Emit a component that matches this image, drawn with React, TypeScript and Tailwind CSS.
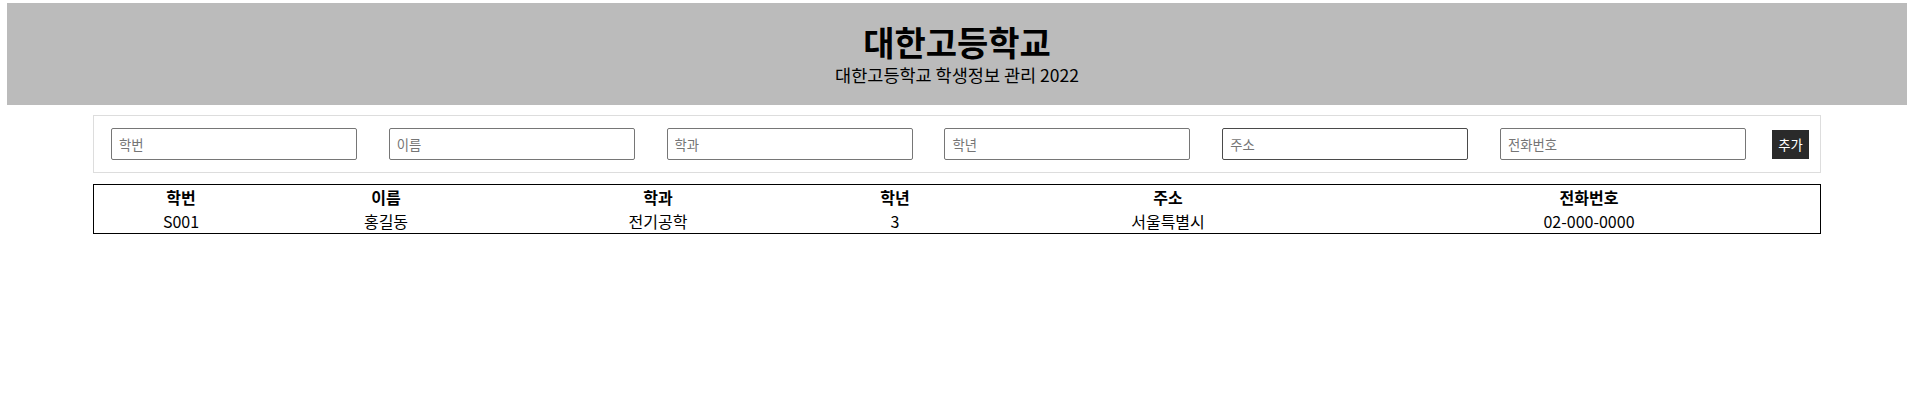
import React from "react"

const fields = ["학번", "이름", "학과", "학년", "주소", "전화번호"]

const columns = [
  { key: "id", label: "학번" },
  { key: "name", label: "이름" },
  { key: "dept", label: "학과" },
  { key: "grade", label: "학년" },
  { key: "addr", label: "주소" },
  { key: "phone", label: "전화번호" },
]

const students = [
  { id: "S001", name: "홍길동", dept: "전기공학", grade: "3", addr: "서울특별시", phone: "02-000-0000" },
]

export default function App() {
  return (
    <div className="min-h-[404px] bg-white pt-[3px] text-black font-['Noto_Sans_CJK_KR','Noto_Sans',sans-serif]">
      {/* Header */}
      <header className="mx-[7px] bg-[#bbbbbb] pt-[17px] pb-[19px] text-center">
        <h1 className="text-[34px] font-bold leading-[44px]">대한고등학교</h1>
        <p className="text-[17.5px] leading-[22px]">대한고등학교 학생정보 관리 2022</p>
      </header>

      {/* Input form */}
      <form
        className="mx-auto mt-[10px] flex w-[1728px] items-center border border-[#dddddd] py-[12px] pl-[17px]"
        onSubmit={(e) => e.preventDefault()}
      >
        <div className="flex gap-[31.8px]">
          {fields.map((f) => (
            <input
              key={f}
              type="text"
              placeholder={f}
              className={
                "h-[32px] w-[246px] rounded-[2px] border px-[7px] text-[13.33px] placeholder:text-[#757575] outline-none " +
                (f === "주소" ? "border-[#4a4a4a]" : "border-[#767676]")
              }
            />
          ))}
        </div>
        <button
          type="submit"
          className="ml-[26px] h-[29px] w-[37px] bg-[#2a2a2a] text-[13.33px] leading-[29px] text-white"
        >
          추가
        </button>
      </form>

      {/* Student table */}
      <div className="mx-auto mt-[11px] w-[1728px] border border-black text-[16px]">
        <div className="grid grid-cols-[174px_236px_308px_166px_380px_462px]">
          {columns.map((c) => (
            <div key={c.key} className="h-[24px] text-center font-bold leading-[24px]">
              {c.label}
            </div>
          ))}
          {students.map((s) =>
            columns.map((c) => (
              <div key={s.id + c.key} className="h-[24px] text-center leading-[24px]">
                {s[c.key as keyof typeof s]}
              </div>
            ))
          )}
        </div>
      </div>
    </div>
  )
}
